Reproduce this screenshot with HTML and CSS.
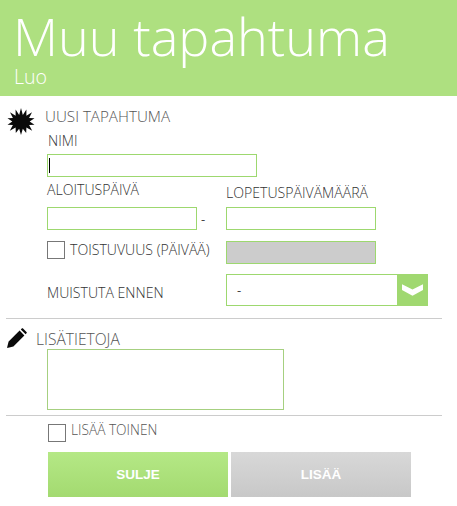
FILE: index.html
```html
<!DOCTYPE html>
<html lang="fi">
<head>
<meta charset="utf-8">
<title>Muu tapahtuma</title>
<link rel="stylesheet" href="styles.css">
</head>
<body>
<header class="banner">
  <h1 class="title">Muu tapahtuma</h1>
  <div class="subtitle">Luo</div>
</header>
<main class="content">
  <section class="new-event">
    <div class="section-head">
      <svg class="star" viewBox="0 0 28 28"><polygon fill="#0a0a0a" points="14,0 15.9,7.2 19.6,1.6 19.6,8 25.4,4.4 22.4,10.4 28,10.6 23,14 28,17.4 22.4,17.6 25.6,23.6 19.6,20.2 19.4,26 15.9,21.4 14,28 12.1,21.4 8.6,26 8.4,20.2 2.4,23.6 5.6,17.6 0,17.4 5,14 0,10.6 5.6,10.4 2.6,4.4 8.4,8 8.4,1.6 12.1,7.2"/></svg>
      <span class="section-title">UUSI TAPAHTUMA</span>
    </div>
    <div class="field-name">
      <div class="label name-label">NIMI</div>
      <div class="input name-input"><span class="caret"></span></div>
    </div>
    <div class="dates">
      <div class="label start-label">ALOITUSPÄIVÄ</div>
      <div class="label end-label">LOPETUSPÄIVÄMÄÄRÄ</div>
      <div class="date-cell"><div class="input date-input"></div><span class="dash">-</span></div>
      <div class="input date-input"></div>
      <div class="check-row"><span class="checkbox"></span><span class="label">TOISTUVUUS (PÄIVÄÄ)</span></div>
      <div class="input date-input disabled"></div>
      <div class="label remind-label">MUISTUTA ENNEN</div>
      <div class="select">
        <span class="select-value">-</span>
        <span class="select-btn"><svg class="chevron" viewBox="0 0 22 12"><polygon fill="#fff" points="0,0 11,5.5 22,0 22,6 11,12 0,6"/></svg></span>
      </div>
    </div>
  </section>
  <hr class="rule first-rule">
  <section class="details">
    <div class="details-head">
      <svg class="pencil" viewBox="0 0 20 20"><path fill="#0a0a0a" d="M0 20 L1.6 13.6 L12.6 2.6 L17.4 7.4 L6.4 18.4 Z M13.8 1.4 L15 .3 Q15.4 0 15.8 .3 L19.7 4.2 Q20 4.6 19.7 5 L18.6 6.2 Z"/></svg>
      <span class="section-title">LISÄTIETOJA</span>
    </div>
    <div class="textarea"></div>
  </section>
  <hr class="rule second-rule">
  <div class="add-another"><span class="checkbox"></span><span class="section-title small">LISÄÄ TOINEN</span></div>
  <div class="actions">
    <button class="btn btn-green" type="button">SULJE</button>
    <button class="btn btn-grey" type="button">LISÄÄ</button>
  </div>
</main>
</body>
</html>
```
FILE: styles.css
```css
* { box-sizing: border-box; }
html, body { margin: 0; padding: 0; }
body {
  width: 457px;
  height: 506px;
  overflow: hidden;
  background: #fff;
  font-family: "Open Sans", "Liberation Sans", sans-serif;
  color: #555;
}
.banner {
  height: 96px;
  background: #aee080;
  color: #fff;
  padding-left: 14px;
  overflow: hidden;
}
.title {
  margin: 0 0 0 -1px;
  font-size: 52.2px;
  font-weight: 300;
  line-height: 71px;
  height: 64px;
  white-space: nowrap;
}
.subtitle {
  font-size: 19.6px;
  font-weight: 300;
  line-height: 26px;
}
.content { padding: 12px 15px 0 6px; }
.section-head { display: flex; align-items: flex-start; height: 27px; padding-left: 1px; }
.star { width: 28px; height: 27px; flex: none; }
.section-title {
  font-size: 15.2px;
  font-weight: 300;
  line-height: 18px;
  color: #555;
  margin-left: 10px;
}
.section-head .section-title { margin-top: -1px; }
.label { font-size: 14.1px; font-weight: 300; line-height: 18px; color: #333; white-space: nowrap; }
.field-name { margin-left: 41px; margin-top: -3px; }
.name-label { margin-left: 1px; margin-bottom: 4px; }
.input { border: 1px solid #9dd86f; height: 23px; background: #fff; }
.name-input { width: 210px; padding: 3px 0 0 1px; }
.caret { display: block; width: 1px; height: 15px; background: #000; }
.dates {
  display: grid;
  grid-template-columns: 179px 150px;
  grid-template-rows: auto auto auto auto;
  margin: 4px 0 0 41px;
  align-items: start;
}
.start-label { margin-bottom: 3px; }
.end-label { margin-top: 3px; }
.date-cell { display: flex; align-items: center; margin-top: 5px; }
.dates > .date-input { margin-top: 5px; }
.dates > .check-row + .date-input { margin-top: 11px; }
.date-input { width: 150px; }
.dash { font-size: 13px; margin-left: 4px; color: #444; }
.check-row { display: flex; align-items: center; margin-top: 11px; height: 18px; gap: 5px; }
.checkbox { width: 18px; height: 18px; border: 1px solid #777; display: block; flex: none; }
.dates > .disabled { background: #ccc; }
.remind-label { margin-top: 20px; }
.select {
  width: 202px;
  height: 32px;
  margin-top: 10px;
  border: 1px solid #9dd86f;
  border-right: 0;
  display: flex;
  align-items: center;
  justify-content: space-between;
  grid-column: 2;
  grid-row: 4;
}
.select-value { margin-left: 10px; font-size: 13px; color: #444; }
.select-btn {
  width: 31px;
  background: #a0d870;
  display: flex;
  align-items: center;
  justify-content: center;
  align-self: stretch;
  margin: -1px 0;
}
.chevron { width: 21px; height: 12px; }
.rule { border: 0; border-top: 1px solid #ccc; height: 0; margin: 0; width: 436px; }
.first-rule { margin-top: 12px; }
.details-head { display: flex; align-items: flex-start; height: 21px; margin-top: 9px; padding-left: 1px; }
.pencil { width: 20px; height: 20px; flex: none; }
.details-head .section-title { margin-left: 9px; margin-top: 2px; font-size: 15.6px; }
.textarea {
  width: 237px;
  height: 61px;
  margin-left: 41px;
  border: 1px solid #a6d080;
  background: #fff;
}
.second-rule { margin-top: 5px; }
.add-another { display: flex; align-items: flex-start; margin: 8px 0 0 42px; height: 18px; }
.add-another .section-title { margin-left: 5px; margin-top: -3px; font-size: 13.7px; }
.actions { display: flex; gap: 3px; margin: 10px 0 0 42px; }
.btn {
  width: 180px;
  height: 45px;
  border: 0;
  padding: 0;
  color: #fff;
  font-family: "Liberation Sans", Arial, sans-serif;
  font-size: 13.5px;
  font-weight: 700;
}
.btn-green { background: linear-gradient(#b5e886, #a3da70); }
.btn-grey { background: linear-gradient(#d8d8d8, #c8c8c8); }
```
